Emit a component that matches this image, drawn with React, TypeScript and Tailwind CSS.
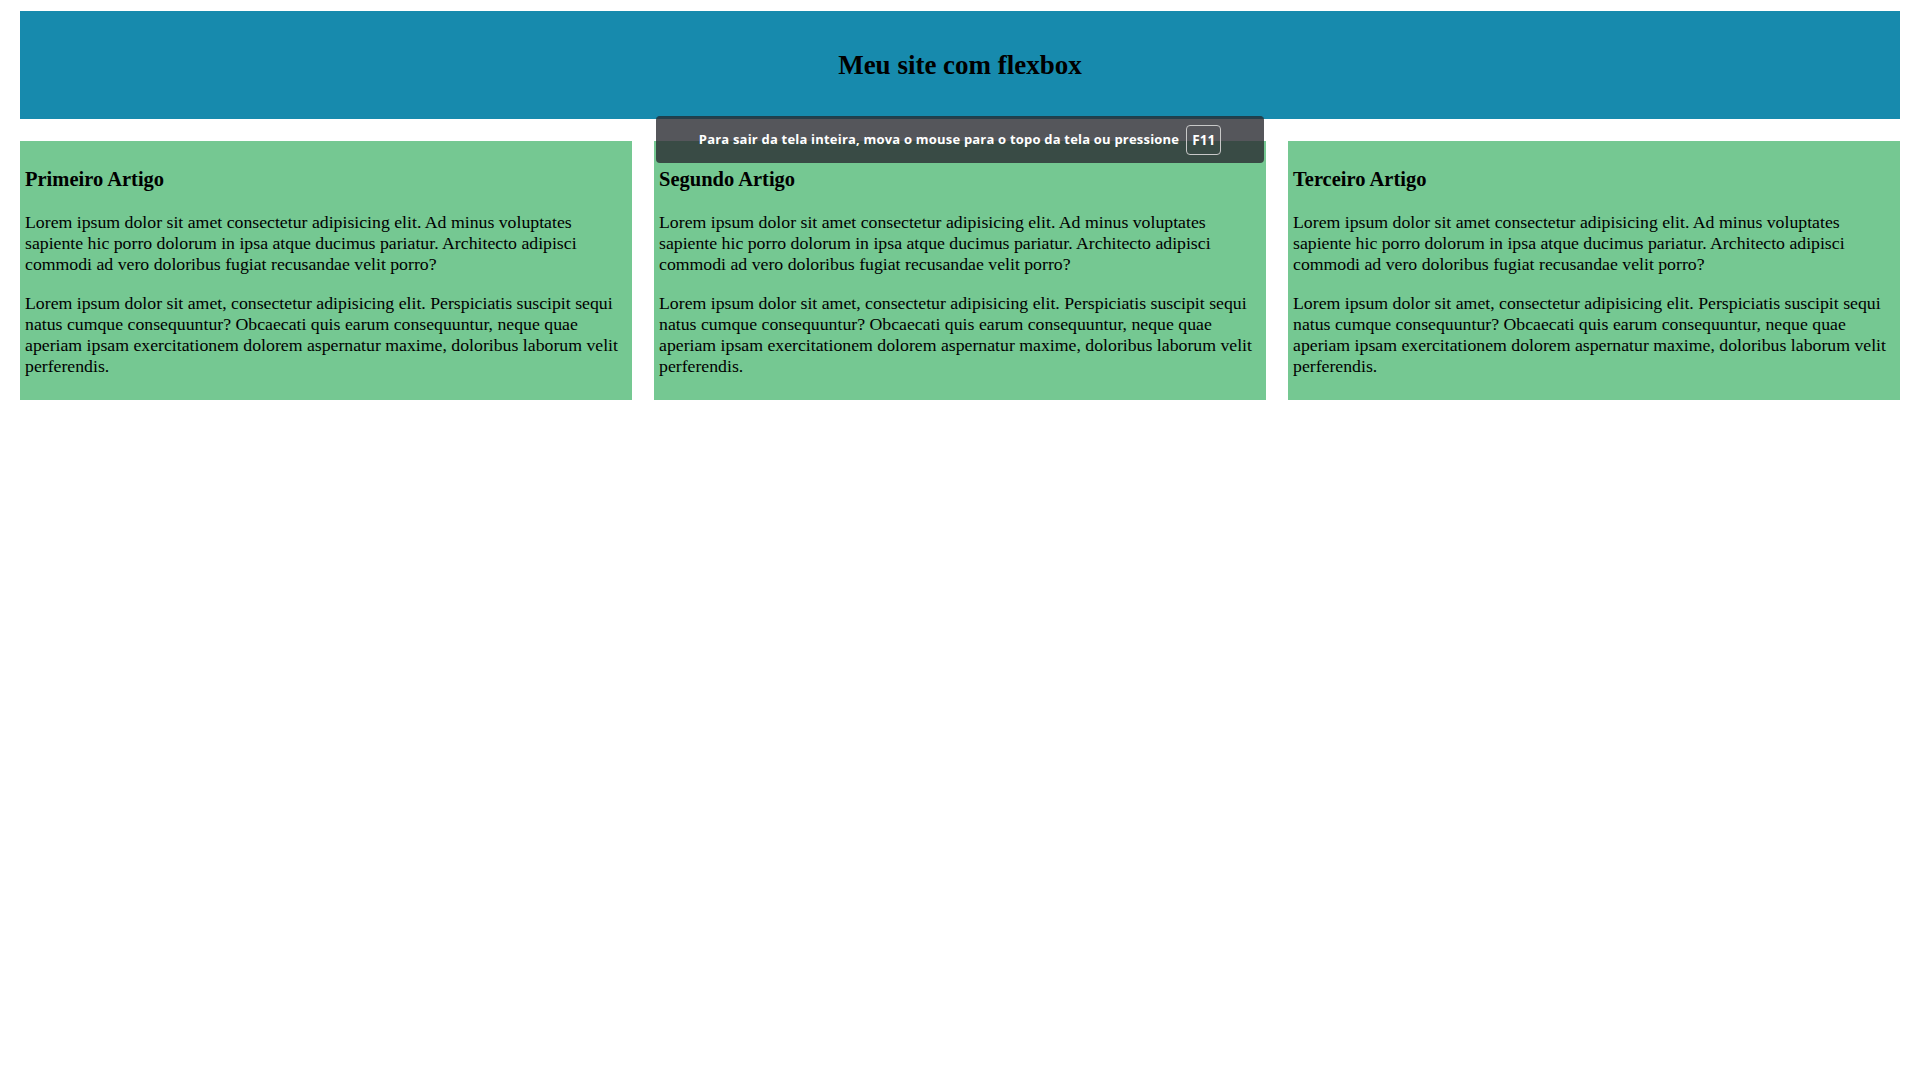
const artigos = ["Primeiro Artigo", "Segundo Artigo", "Terceiro Artigo"];

const p1 =
  "Lorem ipsum dolor sit amet consectetur adipisicing elit. Ad minus voluptates sapiente hic porro dolorum in ipsa atque ducimus pariatur. Architecto adipisci commodi ad vero doloribus fugiat recusandae velit porro?";
const p2 =
  "Lorem ipsum dolor sit amet, consectetur adipisicing elit. Perspiciatis suscipit sequi natus cumque consequuntur? Obcaecati quis earum consequuntur, neque quae aperiam ipsam exercitationem dolorem aspernatur maxime, doloribus laborum velit perferendis.";

export default function App() {
  return (
    <div className="relative min-h-screen bg-white px-[20px] pt-[11px] font-['Liberation_Serif','Times_New_Roman',serif] text-black">
      <header className="flex h-[108px] items-center justify-center bg-[#178aad]">
        <h1 className="text-[27px] font-bold leading-[31px]">Meu site com flexbox</h1>
      </header>

      <main className="mt-[22px] flex gap-[22px]">
        {artigos.map((titulo) => (
          <article key={titulo} className="flex-1 bg-[#75c892] p-[5px]">
            <h3 className="my-[21px] text-[20.5px] font-bold leading-[24px]">{titulo}</h3>
            <p className="my-[18px] text-[17.75px] leading-[21px]">{p1}</p>
            <p className="mt-[18px] text-[17.75px] leading-[21px]">{p2}</p>
            <div className="h-[18px]" />
          </article>
        ))}
      </main>

      {/* aviso de tela cheia do navegador */}
      <div className="absolute left-[656px] top-[116px] flex h-[47px] w-[608px] items-center justify-center gap-[7px] rounded-[4px] border-t border-[#1d3f4c] bg-[rgba(42,44,50,0.8)] font-['Open_Sans',sans-serif] text-white">
        <span className="text-[13px] font-bold tracking-[0.2px]">
          Para sair da tela inteira, mova o mouse para o topo da tela ou pressione
        </span>
        <span className="flex h-[30px] w-[35px] items-center justify-center rounded-[4px] border border-[#c8c8c8] text-[13.5px] font-bold">
          F11
        </span>
      </div>
    </div>
  );
}
